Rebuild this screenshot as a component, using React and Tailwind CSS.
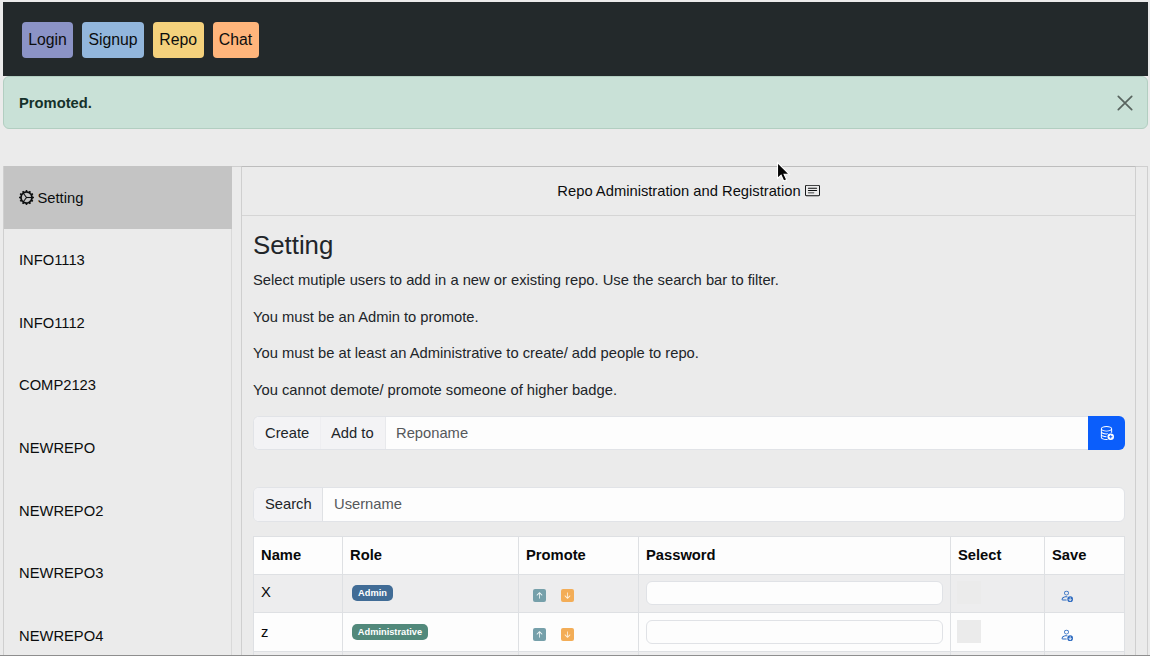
import React from 'react';
import {
  BsGearWideConnected,
  BsCardText,
  BsDatabaseAdd,
  BsPersonDown,
  BsArrowUpShort,
  BsArrowDownShort,
} from 'react-icons/bs';

const repos = ['INFO1113', 'INFO1112', 'COMP2123', 'NEWREPO', 'NEWREPO2', 'NEWREPO3', 'NEWREPO4'];

const notes = [
  'Select mutiple users to add in a new or existing repo. Use the search bar to filter.',
  'You must be an Admin to promote.',
  'You must be at least an Administrative to create/ add people to repo.',
  'You cannot demote/ promote someone of higher badge.',
];

const users = [
  { name: 'X', role: 'Admin', badge: 'w-[41px] bg-[#416c96]', row: 'bg-[#ededee]', height: 'h-[37px] pt-[6px]', inset: 'pt-0' },
  { name: 'z', role: 'Administrative', badge: 'w-[76px] bg-[#52897b]', row: 'bg-[#fdfdfd]', height: 'h-[37px] pt-[7px]', inset: 'pt-px' },
  { name: '', role: '', badge: '', row: 'bg-[#ededee]', height: 'h-[38px]', inset: 'pt-px' },
];

const columns = 'grid grid-cols-[88px_176px_120px_312px_94px_80px]';

function NavButton({ className, children }) {
  return (
    <button className={`h-9 shrink-0 rounded-[4px] text-[15.8px] leading-9 text-[#0b0d0e] ${className}`}>{children}</button>
  );
}

function Cell({ className = '', children }) {
  return <div className={`flex min-w-0 border-l border-[#dee0e3] ${className}`}>{children}</div>;
}

function UserRow({ user }) {
  return (
    <div className={`${columns} ${user.row} box-content border-b border-[#dee0e3]`}>
      <Cell className="!border-l-0">
        <div className={user.inset}>
          <div className={`${user.height} pl-[7px] leading-[22px]`}>{user.name}</div>
        </div>
      </Cell>
      <Cell className={user.inset}>
        <div className="pt-[10px] pl-[9px]">
          {user.role && (
            <div className={`h-4 rounded-[5px] text-center text-[9.25px] font-bold leading-4 text-white ${user.badge}`}>
              {user.role}
            </div>
          )}
        </div>
      </Cell>
      <Cell className={user.inset}>
        <div className="flex items-start gap-[14.5px] pt-[14px] pl-[14px]">
          <span className="flex h-[13px] w-[13px] items-center justify-center rounded-[2px] bg-[#76a0aa] text-[#eef6f6]">
            <BsArrowUpShort size={13} />
          </span>
          <span className="flex h-[13px] w-[13px] items-center justify-center rounded-[2px] bg-[#f3ad57] text-[#fdf1de]">
            <BsArrowDownShort size={13} />
          </span>
        </div>
      </Cell>
      <Cell className={user.inset}>
        <div className="w-full px-[7px] pt-[6px]">
          <div className="h-6 w-full rounded-[6px] border border-[#e0e2e6] bg-[#fdfdfd]" />
        </div>
      </Cell>
      <Cell className={user.inset}>
        <div className="pt-[6px] pl-[6px]">
          <div className="h-[23px] w-6 bg-[#ebebeb]" />
        </div>
      </Cell>
      <Cell className={user.inset}>
        <div className="pt-[14px] pl-[15px] text-[#2c6ac0]">
          <BsPersonDown size={13} />
        </div>
      </Cell>
    </div>
  );
}

export default function App() {
  return (
    <div className="relative flex h-[656px] w-[1150px] flex-col overflow-hidden bg-[#ebebeb] pr-[2px] pl-[3px] pt-[2px] font-['Liberation_Sans',Arial,sans-serif] text-[14.74px] text-[#0b0d0e]">
      <nav className="flex h-[74px] shrink-0 items-start gap-[9px] bg-[#23292b] pt-5 pl-[19px]">
        <NavButton className="w-[51px] bg-[#8b93c6]">Login</NavButton>
        <NavButton className="w-[62px] bg-[#92b6dc]">Signup</NavButton>
        <NavButton className="w-[50.5px] bg-[#f4d17c]">Repo</NavButton>
        <NavButton className="w-[46px] bg-[#ffb57b]">Chat</NavButton>
      </nav>

      <div className="flex h-[53px] shrink-0 items-center justify-between rounded-[6px] border border-[#b2cec1] bg-[#c9e1d7] pr-[14px] pl-[15px]">
        <strong className="pt-px text-[#15312a]">Promoted.</strong>
        <svg width="16" height="16" viewBox="0 0 16 16" fill="none" stroke="#58645f" strokeWidth="1.7" strokeLinecap="round">
          <path d="M1.3 1.3 14.7 14.7M14.7 1.3 1.3 14.7" />
        </svg>
      </div>

      <div className="mt-[37px] flex h-[500px] shrink-0 border border-b-0 border-[#cfcfcf]">
        <aside className="-mt-px w-[228px] shrink-0 border-r border-[#d9d9d9]">
          <div className="-mr-px flex h-[63px] items-center gap-[4px] bg-[#c4c4c4] pl-[14.5px]">
            <BsGearWideConnected size={15} strokeWidth={0.1} />
            <span className="pt-px">Setting</span>
          </div>
          {repos.map((repo) => (
            <div key={repo} className="flex h-[62.7px] items-center pb-[0.6px] pl-[15px]">{repo}</div>
          ))}
        </aside>

        <main className="-mt-px ml-[9px] w-[895px] shrink-0 border border-b-0 border-[#cfcfcf] border-t-[#bdbdbd]">
          <header className="flex h-[49px] items-center justify-center gap-[4px] border-b border-[#d5d5d5]">
            <span>Repo Administration and Registration</span>
            <BsCardText size={15} className="-mt-px" />
          </header>

          <div className="pr-[10px] pl-[11px] pt-[14px] text-[#212529]">
            <h1 className="text-[25.8px] leading-[31px]">Setting</h1>
            <div className="mt-[7.8px] flex flex-col gap-[14.8px]">
              {notes.map((note) => (
                <p key={note} className="leading-[22px]">{note}</p>
              ))}
            </div>

            <div className="mt-[15.2px] flex h-[34px]">
              <div className="flex flex-1 overflow-hidden rounded-l-[6px] border border-r-0 border-[#e1e3e7] bg-[#fdfdfd] leading-8">
                <div className="w-[67px] border-r border-[#eeeef1] bg-[#f3f3f5] pl-[11px]">Create</div>
                <div className="w-[65px] border-r border-[#e8e9ec] bg-[#f3f3f5] pl-[10px]">Add to</div>
                <div className="pl-[10px] text-[#55585b]">Reponame</div>
              </div>
              <button className="flex w-[37px] items-center justify-center rounded-r-[6px] bg-[#0b5efb] text-white">
                <BsDatabaseAdd size={15} className="-mt-px -ml-px" />
              </button>
            </div>

            <div className="mt-[37px] flex h-[35px] overflow-hidden rounded-[6px] border border-[#e1e3e7] bg-[#fdfdfd] leading-[33px]">
              <div className="w-[69px] border-r border-[#dfe1e4] bg-[#f3f3f5] pl-[11px]">Search</div>
              <div className="pl-[11px] text-[#55585b]">Username</div>
            </div>

            <div className="mt-[14px] border border-b-0 border-[#dee0e3] text-[#08090a]">
              <div className={`${columns} h-[38px] border-b border-[#dee0e3] bg-[#fdfdfd] font-bold leading-9`}>
                <Cell className="!border-l-0 pl-[7px]">Name</Cell>
                <Cell className="pl-[7px]">Role</Cell>
                <Cell className="pl-[7px]">Promote</Cell>
                <Cell className="pl-[7px]">Password</Cell>
                <Cell className="pl-[7px]">Select</Cell>
                <Cell className="pl-[7px]">Save</Cell>
              </div>
              {users.map((user, index) => (
                <UserRow key={index} user={user} />
              ))}
            </div>
          </div>
        </main>
      </div>

      <div className="absolute bottom-0 left-0 h-px w-full bg-[#8e8e8e]" />
      <svg className="absolute top-[161px] left-[775px]" width="16" height="22" viewBox="0 0 16 22">
        <path d="M2.5 1.5v16l3.6-3.3 2.6 5.8 3-1.3-2.6-5.5h5z" fill="#050505" stroke="#fff" strokeWidth="1.1" />
      </svg>
    </div>
  );
}
